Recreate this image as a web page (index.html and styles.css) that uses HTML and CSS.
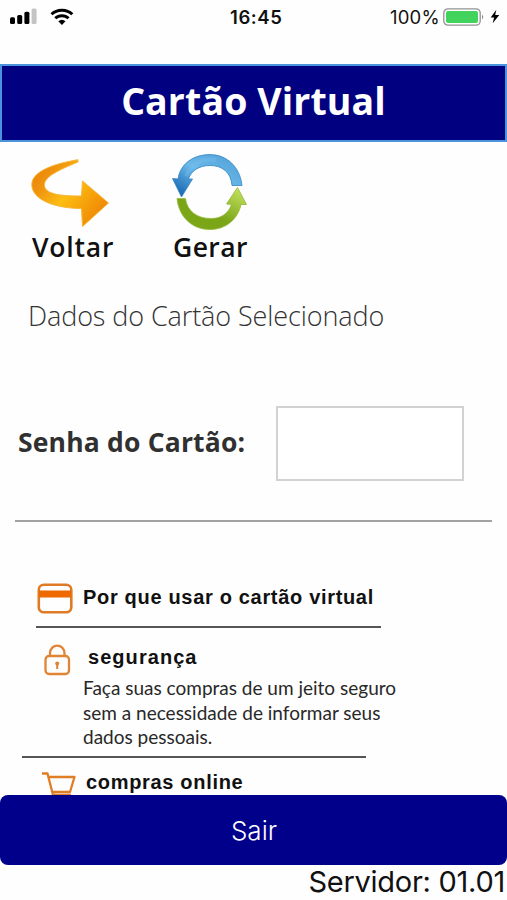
FILE: index.html
```html
<!DOCTYPE html>
<html lang="pt-BR">
<head>
<meta charset="utf-8">
<title>Cartão Virtual</title>
<link rel="stylesheet" href="styles.css">
</head>
<body>
<header class="status">
  <svg class="signal" width="28" height="18" viewBox="0 0 28 18"><rect x="0" y="9.2" width="5" height="6.8" rx="1.5"/><rect x="7.2" y="7" width="5" height="9" rx="1.5"/><rect x="14.4" y="3.8" width="5" height="12.2" rx="1.5"/><rect x="21.6" y="0.5" width="5" height="15.5" rx="1.5" fill="#c4c4c4"/></svg>
  <svg class="wifi" width="24" height="18" viewBox="0 0 24 18" fill="none" stroke="#000" stroke-width="3"><path d="M1.5 6.3C7 .8 16.800 .8 22.300 6.300"/><path d="M5.300 10.300C8.800 6.800 15 6.800 18.500 10.300"/><path d="M8.300 13.300Q11.900 10.300 15.500 13.300L11.900 17Z" fill="#000" stroke="none"/></svg>
  <span class="time">16:45</span>
  <span class="percent">100%</span>
  <svg class="battery" width="42" height="19" viewBox="0 0 42 19"><rect x=".8" y=".8" width="36.400" height="16.400" rx="4.200" fill="#fff" stroke="#929292" stroke-width="1.300"/><rect x="3" y="3" width="32" height="12" rx="2" fill="#41d35b"/><path d="M39 6.500q2.500 2.500 0 5z" fill="#929292"/></svg>
  <svg class="bolt" width="10" height="16" viewBox="0 0 10 16"><path d="M6.300.8.700 8.500h3.400L2.700 14.300 9.300 6H5.200z"/></svg>
</header>
<h1 class="title"><span>Cartão Virtual</span></h1>
<nav class="actions">
  <a class="action back">
    <svg width="80" height="72" viewBox="0 0 80 72">
      <defs><linearGradient id="gold" x1="0" y1="0" x2="1" y2=".7"><stop offset="0" stop-color="#e97905"/><stop offset=".3" stop-color="#f09710"/><stop offset=".55" stop-color="#fdbd12"/><stop offset="1" stop-color="#ef8605"/></linearGradient></defs>
      <path d="M47 .7C27 4 1 11 .800 25.500C.600 41 25 49.500 50.500 49.500L51.500 67.500L77.500 44L51.500 22L50.500 37C32 37 15 36 13.500 27C12 18 28 11 47 3Z" fill="url(#gold)" stroke="#f7b633" stroke-width="1" stroke-linejoin="round"/>
    </svg>
    <span>Voltar</span>
  </a>
  <a class="action generate">
    <svg width="76" height="78" viewBox="0 0 76 78">
      <defs><linearGradient id="blue" x1="1" y1="0" x2="0" y2="1"><stop offset="0" stop-color="#4e9ed4"/><stop offset=".5" stop-color="#6bb9ea"/><stop offset="1" stop-color="#0759a8"/></linearGradient><linearGradient id="green" x1="0" y1="1" x2=".8" y2="0"><stop offset="0" stop-color="#7ca719"/><stop offset=".45" stop-color="#79a516"/><stop offset="1" stop-color="#bfdd5a"/></linearGradient></defs>
      <path d="M70 31.500C68 13 55 .6 38 .6C20 .6 8 11 6 25L.500 24.500L9.500 43L20.500 25L16.500 25C19 17 27 11.500 38 11.500C50 11.500 59 18 60 31.500Z" fill="url(#blue)" stroke="#3184c2" stroke-width=".8"/>
      <path d="M5 44.500C7 63 20 75.500 38 75.500C54 75.500 66 65 69 50.500L74.500 50.500L65.500 33.500L54.500 50L59.500 50.500C56 60 49 64.500 39 64.500C25 64.500 15 57 13.500 44.500Z" fill="url(#green)" stroke="#93b83b" stroke-width=".8"/>
      <path d="M14 22C20 8 32 4 44 6" fill="none" stroke="#7bc1ed" stroke-width="4" opacity=".35"/>
    </svg>
    <span>Gerar</span>
  </a>
</nav>
<h2 class="section"><span>Dados do Cartão Selecionado</span></h2>
<form class="field">
  <label for="senha">Senha do Cartão:</label>
  <input id="senha" type="password">
</form>
<hr class="divider">
<main class="info">
  <div class="heading why">
    <svg width="37" height="32" viewBox="0 0 37 32"><rect x="1.800" y="1.800" width="32.500" height="27.500" rx="5" fill="none" stroke="#e07b25" stroke-width="2.600"/><path d="M2 7.500h32v7H2z" fill="#ee6900"/></svg>
    <h3>Por que usar o cartão virtual</h3>
  </div>
  <div class="heading safe">
    <svg width="27" height="32" viewBox="0 0 27 32" fill="none" stroke="#df8535" stroke-width="2.300"><rect x="1.500" y="12" width="23.500" height="18" rx="3.500"/><path d="M6 12V9.500C6 -1 20.500-1 20.500 9.500V12"/><circle cx="13.200" cy="19.500" r="2" fill="#df8535" stroke="none"/><path d="M13.200 20v5" stroke-width="2"/></svg>
    <h3>segurança</h3>
  </div>
  <p>Faça suas compras de um jeito seguro<br>sem a necessidade de informar seus<br>dados pessoais.</p>
  <div class="heading shop">
    <svg width="36" height="32" viewBox="0 0 36 32" fill="none" stroke="#df7e24" stroke-width="2.300" stroke-linejoin="round"><path d="M1 2.500h5.500L12 24h18"/><path d="M7.500 6H33.500L29 21H11.500"/><circle cx="14" cy="27" r="3"/><circle cx="27" cy="27" r="3"/></svg>
    <h3>compras online</h3>
  </div>
</main>
<button class="exit"><span>Sair</span></button>
<footer class="server"><span>Servidor: 01.01</span></footer>
</body>
</html>
```

FILE: styles.css
```css
* { box-sizing: border-box; }
body {
  margin: 0;
  width: 507px;
  height: 900px;
  display: flex;
  flex-direction: column;
  overflow: hidden;
  background: #fefefe;
  color: #111;
  font-family: "Open Sans", sans-serif;
}
svg { display: block; flex: none; }
h1, h2, h3, p { margin: 0; white-space: nowrap; }
.status {
  height: 64px;
  flex: none;
  display: flex;
  align-items: flex-start;
  padding: 8px 0 0 10px;
  font: 400 18.500px/18px Inter, sans-serif;
}
.signal { margin-right: 12px; }
.wifi { width: 24px; }
.time { margin-left: 156px; width: 54px; font-weight: 600; letter-spacing: .6px; }
.percent { margin-left: 106px; width: 53px; letter-spacing: .2px; }
.bolt { margin: 1px 0 0 5px; }
.title {
  height: 78px;
  flex: none;
  display: flex;
  justify-content: center;
  align-items: center;
  padding-bottom: 5px;
  border: 2px solid #4b94dc;
  background: #000080;
  color: #fff;
  font-size: 37.500px;
  font-weight: 700;
  letter-spacing: .1px;
}
.actions { height: 148px; flex: none; display: flex; padding: 12px 0 0 31px; }
.action { display: flex; flex-direction: column; font: 600 26.500px/32px "Open Sans", sans-serif; }
.back { width: 141px; padding-top: 5px; }
.back span { padding-left: 1px; letter-spacing: .8px; }
.generate span { padding-left: 1px; margin-top: -1px; letter-spacing: .4px; }
.section {
  height: 52px;
  flex: none;
  padding-left: 28px;
  font-size: 27px;
  line-height: 52px;
  font-weight: 300;
  letter-spacing: -.1px;
  color: #333;
}
.field { height: 178px; flex: none; display: flex; align-items: center; padding: 25px 0 0 18px; }
.field label { width: 258px; padding-bottom: 3px; font-size: 26.500px; font-weight: 700; letter-spacing: .18px; color: #303030; white-space: nowrap; }
.field input { width: 188px; height: 75px; padding: 8px; border: 2px solid #d2d2d2; background: #fff; }
.divider { width: 477px; height: 2px; flex: none; margin: 0 0 0 15px; border: 0; background: #a2a2a2; }
.info { height: 274px; flex: none; overflow: hidden; padding: 61px 0 0 22px; }
.heading { display: flex; }
.heading h3 { font: 700 20px/26px "Liberation Sans", sans-serif; letter-spacing: .68px; }
.why { width: 359px; height: 45px; padding-left: 15px; position: relative; }
.why::after { content: ""; position: absolute; left: 14px; right: 0; bottom: 0; height: 2px; background: #555; }
.why h3 { margin: 1px 0 0 9px; }
.safe { height: 47px; padding: 16px 0 0 22px; }
.safe h3 { margin-left: 17px; letter-spacing: 1.050px; }
.info p { height: 81px; padding: 1px 0 0 61px; font: 400 19px/24.500px Lato, sans-serif; color: #282828; }
.shop { width: 344px; height: 60px; padding: 13px 0 0 19px; border-top: 2px solid #555; }
.shop h3 { margin: -2px 0 0 9px; }
.exit {
  height: 70px;
  flex: none;
  margin: -1px 0 0;
  padding: 0 0 0 1px;
  border: 0;
  border-radius: 8px;
  background: #00008b;
  color: #fff;
  font: 300 26px/72px Inter, sans-serif;
  position: relative;
}
.server { height: 35px; flex: none; text-align: right; padding-right: 2px; font: 400 29px/34px Inter, sans-serif; letter-spacing: -.27px; white-space: nowrap; }
```
